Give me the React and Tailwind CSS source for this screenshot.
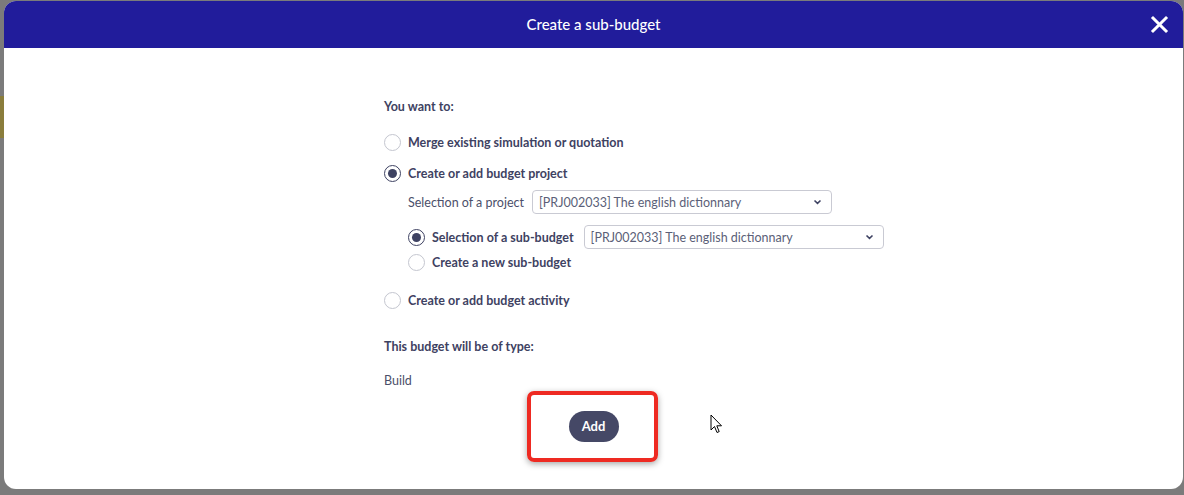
import React, { useState } from "react";

const font = { fontFamily: "Lato, 'Open Sans', sans-serif" };

const Radio = ({ checked, onClick }) => (
  <button
    type="button"
    onClick={onClick}
    className={`w-[17px] h-[17px] rounded-full border flex items-center justify-center bg-white shrink-0 ${
      checked ? "border-[#3e4262] border-[1.5px]" : "border-[#c4c6cf]"
    }`}
  >
    {checked && <span className="w-[9px] h-[9px] rounded-full bg-[#3e4262]" />}
  </button>
);

const Select = ({ width }) => (
  <div
    className={`h-[24px] ${width} border border-[#c9cad3] rounded-[4px] flex items-center justify-between pl-[6px] pr-[9px] text-[12.5px] text-[#5b5f78]`}
  >
    <span>[PRJ002033] The english dictionnary</span>
    <svg width="9" height="6" viewBox="0 0 9 6">
      <path d="M1.5 1.5 L4.5 4.3 L7.5 1.5" fill="none" stroke="#3e4262" strokeWidth="1.6" />
    </svg>
  </div>
);

const App = () => {
  const [choice, setChoice] = useState("project");
  const [sub, setSub] = useState("select");

  return (
    <div className="w-[1184px] h-[495px] bg-[#7b7b7b] relative overflow-hidden" style={font}>
      <div className="absolute left-0 top-[96px] w-[4px] h-[42px] bg-[#8a7d3c]" />
      <div className="absolute left-[4px] top-[1px] w-[1179px] h-[488px] bg-white rounded-[12px] overflow-hidden flex flex-col">
        <div className="h-[47px] bg-[#211c9b] flex items-center justify-center relative shrink-0">
          <h2 className="text-white text-[15px] font-medium">Create a sub-budget</h2>
          <button type="button" className="absolute right-[14px] top-[14px]">
            <svg width="19" height="19" viewBox="0 0 19 19">
              <path d="M3 3 L16 16 M16 3 L3 16" stroke="white" strokeWidth="3" strokeLinecap="square" />
            </svg>
          </button>
        </div>

        <div className="flex-1 flex flex-col pl-[380px] pt-[50px] text-[#3e4262] text-[12.5px] leading-[17px]">
          <p className="h-[17px] font-bold">You want to:</p>

          <div className="h-[17px] flex items-center gap-[7px] mt-[19px]">
            <Radio checked={choice === "merge"} onClick={() => setChoice("merge")} />
            <span className="font-bold">Merge existing simulation or quotation</span>
          </div>

          <div className="h-[17px] flex items-center gap-[7px] mt-[14px]">
            <Radio checked={choice === "project"} onClick={() => setChoice("project")} />
            <span className="font-bold">Create or add budget project</span>
          </div>

          <div className="h-[24px] flex items-center gap-[8px] mt-[8px] pl-[24px]">
            <span className="text-[#4b4f6a]">Selection of a project</span>
            <Select width="w-[300px]" />
          </div>

          <div className="h-[24px] flex items-center gap-[7px] mt-[11px] pl-[24px]">
            <Radio checked={sub === "select"} onClick={() => setSub("select")} />
            <span className="font-bold">Selection of a sub-budget</span>
            <Select width="w-[300px] ml-[3px]" />
          </div>

          <div className="h-[17px] flex items-center gap-[7px] mt-[5px] pl-[24px]">
            <Radio checked={sub === "new"} onClick={() => setSub("new")} />
            <span className="font-bold">Create a new sub-budget</span>
          </div>

          <div className="h-[17px] flex items-center gap-[7px] mt-[21px]">
            <Radio checked={choice === "activity"} onClick={() => setChoice("activity")} />
            <span className="font-bold">Create or add budget activity</span>
          </div>

          <p className="h-[17px] font-bold mt-[29px]">This budget will be of type:</p>
          <p className="h-[17px] text-[#4b4f6a] mt-[17px]">Build</p>
        </div>

        <div className="absolute left-[523px] top-[390px] w-[131px] h-[71px] border-[4px] border-[#ee2a22] rounded-[7px] shadow-[0_2px_6px_rgba(0,0,0,0.35)] flex items-center justify-center">
          <button type="button" className="h-[31px] w-[50px] ml-[2px] rounded-full bg-[#454866] text-white text-[13px] font-bold">
            Add
          </button>
        </div>

        <svg className="absolute left-[706px] top-[413px]" width="14" height="21" viewBox="0 0 14 21">
          <path d="M1 1 L1 16 L4.5 12.5 L7 18.5 L9.2 17.6 L6.8 11.8 L11.5 11.8 Z" fill="white" stroke="black" strokeWidth="1" strokeLinejoin="round" />
        </svg>
      </div>
    </div>
  );
};

export default App;
